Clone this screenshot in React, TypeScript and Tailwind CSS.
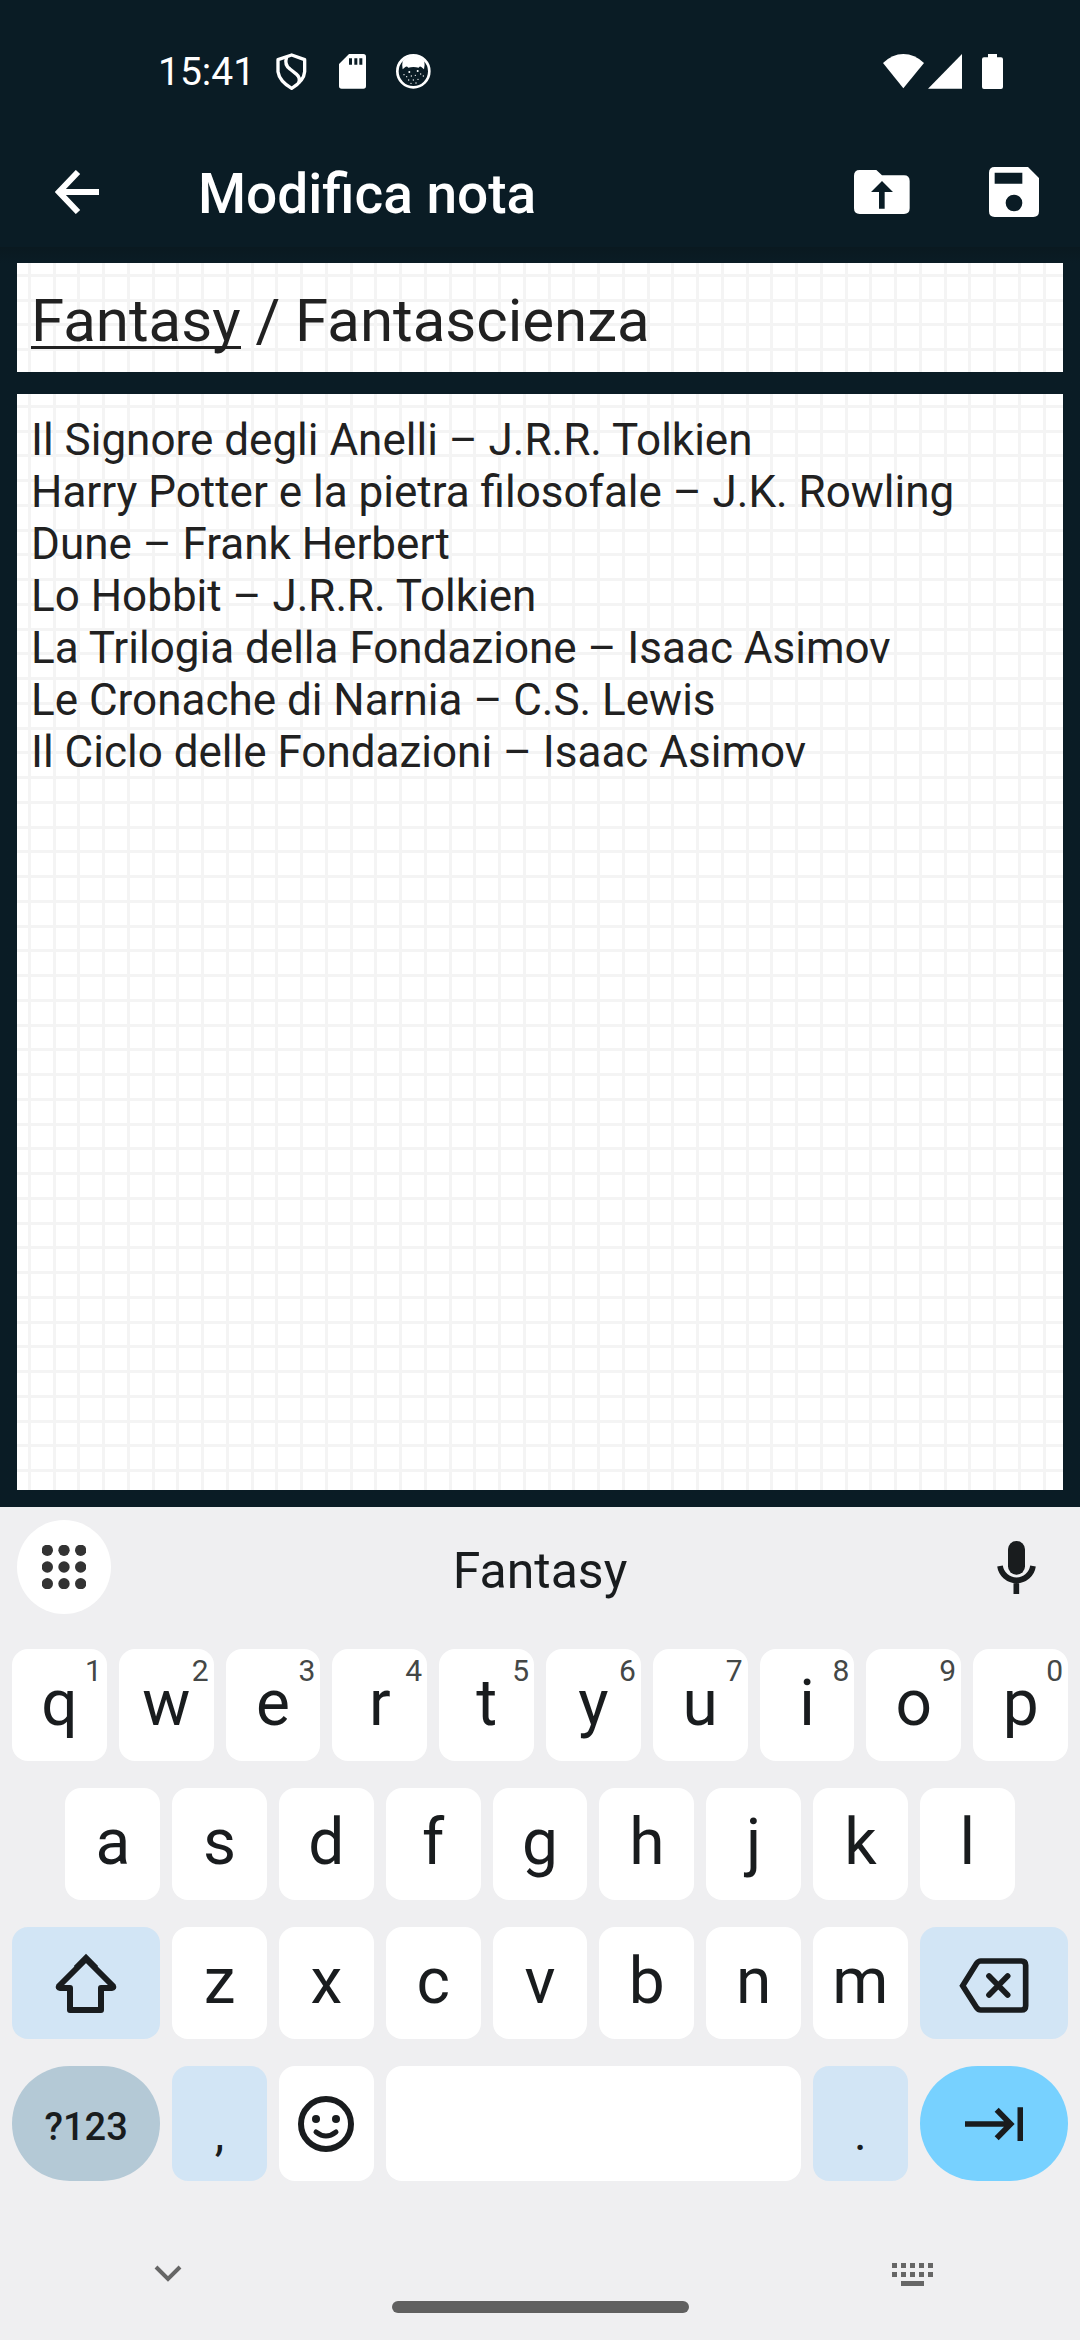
import { useState } from "react";
import type { ReactNode } from "react";

const NOTE = [
  "Il Signore degli Anelli – J.R.R. Tolkien",
  "Harry Potter e la pietra filosofale – J.K. Rowling",
  "Dune – Frank Herbert",
  "Lo Hobbit – J.R.R. Tolkien",
  "La Trilogia della Fondazione – Isaac Asimov",
  "Le Cronache di Narnia – C.S. Lewis",
  "Il Ciclo delle Fondazioni – Isaac Asimov",
].join("\n");

// Squared paper: a 99px tile with four lines per axis.
const PAPER =
  "bg-white bg-[length:99px_99px] bg-[image:linear-gradient(to_right,transparent_11px,#f4f4f4_11px,#f4f4f4_14px,transparent_14px,transparent_36px,#f4f4f4_36px,#f4f4f4_39px,transparent_39px,transparent_60px,#f4f4f4_60px,#f4f4f4_63px,transparent_63px,transparent_85px,#f4f4f4_85px,#f4f4f4_88px,transparent_88px),linear-gradient(to_bottom,transparent_11px,#f4f4f4_11px,#f4f4f4_14px,transparent_14px,transparent_36px,#f4f4f4_36px,#f4f4f4_39px,transparent_39px,transparent_60px,#f4f4f4_60px,#f4f4f4_63px,transparent_63px,transparent_85px,#f4f4f4_85px,#f4f4f4_88px,transparent_88px)]";

function StatusBar() {
  return (
    <div className="flex h-[136px] items-center justify-between pt-[7px] pr-[77px] pl-[158px] text-white">
      <div className="flex items-center">
        <span className="text-[39px] leading-[46px]">15:41</span>
        <svg className="ml-[21px] h-[37px] w-[31px]" viewBox="0 0 93 111" fill="none" stroke="currentColor">
          <path d="M47 6 L86 20 V56 Q84 84 47 106 Q10 84 6 56 V20 Z" strokeWidth="10" strokeLinejoin="round" />
          <path d="M32 12 Q24 36 42 48 L62 64 Q74 74 68 90" strokeWidth="10" />
        </svg>
        <svg className="ml-8 h-[35px] w-[27px]" viewBox="0 0 81 105" fill="currentColor">
          <path fillRule="evenodd" d="M30 0 H73 Q81 0 81 8 V96 Q81 104 73 104 H8 Q0 104 0 96 V30 Z M30 13 V32 H39 V13 Z M46 13 V32 H55 V13 Z M61 13 V32 H70 V13 Z" />
        </svg>
        <svg className="ml-[30px] h-[35px] w-[35px]" viewBox="0 0 105 105">
          <circle cx="52" cy="52" r="48" fill="none" stroke="currentColor" strokeWidth="8" />
          <path
            fill="currentColor"
            d="M20 21 Q34 6 52 6 Q70 6 85 21 Q87 34 84 46 L76 39 Q72 35 68 41 Q52 37 37 41 Q32 35 28 39 L20 46 Q17 34 20 21 Z"
          />
          <g fill="currentColor">
            <circle cx="40" cy="54" r="3" />
            <circle cx="65" cy="51" r="3" />
            <circle cx="24" cy="62" r="2" />
            <circle cx="32" cy="68" r="2" />
            <circle cx="46" cy="66" r="2" />
            <circle cx="58" cy="64" r="2" />
            <circle cx="74" cy="60" r="2" />
            <circle cx="82" cy="66" r="2" />
            <circle cx="38" cy="78" r="2" />
            <circle cx="52" cy="78" r="2" />
            <circle cx="66" cy="76" r="2" />
            <circle cx="45" cy="88" r="2" />
            <circle cx="60" cy="87" r="2" />
          </g>
        </svg>
      </div>
      <div className="flex items-center">
        <svg className="h-[35px] w-[41px]" viewBox="0 0 123 105" fill="currentColor">
          <path d="M0 27 Q28 0 61 0 Q95 0 123 27 L61 103 Z" />
        </svg>
        <svg className="ml-1 h-[35px] w-[34px]" viewBox="0 0 102 105" fill="currentColor">
          <path d="M102 0 V104 H0 Z" />
        </svg>
        <svg className="ml-5 h-[35px] w-[21px]" viewBox="0 0 63 105" fill="currentColor">
          <path d="M18 0 H45 V10 H57 Q63 10 63 16 V99 Q63 105 57 105 H6 Q0 105 0 99 V16 Q0 10 6 10 H18 Z" />
        </svg>
      </div>
    </div>
  );
}

function AppBar() {
  return (
    <header className="flex h-[111px] items-center pr-[41px] pl-[55px] text-white">
      <button type="button" aria-label="Indietro">
        <svg className="h-11 w-11" viewBox="0 0 44 44" fill="none" stroke="currentColor" strokeWidth="6">
          <path d="M44 22 H4 M23 2 L4 22 L23 42" />
        </svg>
      </button>
      <h1 className="ml-[99px] flex-1 pt-1 text-[55px] leading-[64px] font-medium">Modifica nota</h1>
      <button type="button" aria-label="Esporta">
        <svg className="h-11 w-14" viewBox="0 0 168 132" fill="currentColor">
          <path
            fillRule="evenodd"
            d="M17 0 H67 L84 16 H150 Q167 16 167 33 V115 Q167 132 150 132 H17 Q0 132 0 115 V17 Q0 0 17 0 Z M84 33 L51 66 H75 V116 H92 V66 H117 Z"
          />
        </svg>
      </button>
      <button type="button" aria-label="Salva" className="ml-[79px]">
        <svg className="h-[50px] w-[50px]" viewBox="0 0 150 150" fill="currentColor">
          <path
            fillRule="evenodd"
            d="M17 0 H117 L150 33 V133 Q150 150 133 150 H17 Q0 150 0 133 V17 Q0 0 17 0 Z M17 17 V50 H100 V17 Z M75 83 A25 25 0 1 0 75 133 A25 25 0 1 0 75 83 Z"
          />
        </svg>
      </button>
    </header>
  );
}

type KeyProps = { label: string; className: string; children?: ReactNode };

function Key({ label, className, children }: KeyProps) {
  return (
    <button type="button" aria-label={label} className={`relative flex items-center justify-center ${className}`}>
      {children}
    </button>
  );
}

function LetterKey({ char, hint, first }: { char: string; hint?: string; first?: boolean }) {
  return (
    <Key
      label={char}
      className={`h-28 rounded-2xl bg-white pb-[3px] text-[64px] leading-[76px] ${first ? "col-span-2 col-start-2" : "col-span-2"}`}
    >
      {char}
      {hint && <span className="absolute top-1 right-[5px] text-[30px] leading-9 text-[#444746]">{hint}</span>}
    </Key>
  );
}

function Keyboard() {
  return (
    <section aria-label="Tastiera" className="bg-[#efeff1] text-[#191c1e]">
      <div className="grid h-[142px] grid-cols-[94px_1fr_94px] items-start px-[17px] pt-[13px]">
        <button type="button" aria-label="Menu" className="flex h-[94px] items-center justify-center rounded-full bg-white">
          <svg className="h-11 w-11" viewBox="0 0 132 132" fill="#333333">
            {[16, 66, 116].map((y) => [16, 66, 116].map((x) => <circle key={`${x}-${y}`} cx={x} cy={y} r="17" />))}
          </svg>
        </button>
        <button type="button" className="h-[94px] pt-2 text-[50px] leading-[60px]">
          Fantasy
        </button>
        <button type="button" aria-label="Dettatura vocale" className="flex h-[94px] items-center justify-center">
          <svg className="h-[53px] w-[39px]" viewBox="0 0 117 159" fill="none" stroke="currentColor">
            <rect x="33" y="0" width="51" height="101" rx="25" fill="currentColor" stroke="none" />
            <path d="M9 75 A50 50 0 0 0 108 75 M58 125 V159" strokeWidth="17" />
          </svg>
        </button>
      </div>
      <div className="grid grid-cols-20 gap-x-3 gap-y-[27px] px-3">
        {"qwertyuiop".split("").map((c, i) => (
          <LetterKey key={c} char={c} hint={String((i + 1) % 10)} />
        ))}
        {"asdfghjkl".split("").map((c, i) => (
          <LetterKey key={c} char={c} first={i === 0} />
        ))}
        <Key label="Maiuscole" className="col-span-3 col-start-1 h-28 rounded-2xl bg-[#d2e5f5]">
          <svg className="h-[60px] w-[62px]" viewBox="0 0 62 60" fill="none" stroke="currentColor" strokeWidth="6">
            <path d="M31 6 L4 33 Q3 35 5 35 H15 V57 H46 V35 H57 Q59 35 58 33 Z" strokeLinejoin="round" />
            <path d="M21 15 L31 5 L41 15" />
          </svg>
        </Key>
        {"zxcvbnm".split("").map((c) => (
          <LetterKey key={c} char={c} />
        ))}
        <Key label="Cancella" className="col-span-3 h-28 rounded-2xl bg-[#d2e5f5] pt-[5px]">
          <svg className="h-[55px] w-[70px]" viewBox="533 174 210 165" fill="none" stroke="currentColor" strokeWidth="17">
            <path d="M544 257 L586 190 Q591 183 598 183 H720 Q733 183 733 196 V317 Q733 330 720 330 H598 Q591 330 586 323 Z" />
            <path d="M623 228 L679 285 M679 228 L623 285" strokeLinecap="round" />
          </svg>
        </Key>
        <Key
          label="Simboli"
          className="col-span-3 h-[115px] rounded-full bg-[#b4c9d6] pt-[6px] text-[38px] leading-[48px] font-medium"
        >
          ?123
        </Key>
        <Key label="Virgola" className="col-span-2 h-[115px] rounded-2xl bg-[#d2e5f5] pt-5 text-[48px] leading-[56px]">
          ,
        </Key>
        <Key label="Emoji" className="col-span-2 h-[115px] rounded-2xl bg-white">
          <svg className="h-14 w-14" viewBox="0 0 56 56" fill="none" stroke="currentColor">
            <circle cx="28" cy="28" r="25" strokeWidth="6" />
            <path d="M18 36 Q28 44 38 36" strokeWidth="5" strokeLinecap="round" />
            <circle cx="18" cy="23" r="4" fill="currentColor" stroke="none" />
            <circle cx="38" cy="23" r="4" fill="currentColor" stroke="none" />
          </svg>
        </Key>
        <Key label="Spazio" className="col-span-8 h-[115px] rounded-2xl bg-white" />
        <Key label="Punto" className="col-span-2 h-[115px] rounded-2xl bg-[#d2e5f5] pt-5 text-[48px] leading-[56px]">
          .
        </Key>
        <Key label="Avanti" className="col-span-3 h-[115px] rounded-full bg-[#77d1ff]">
          <svg className="h-[34px] w-[58px]" viewBox="552 618 174 102" fill="none" stroke="currentColor" strokeWidth="17">
            <path d="M552 669 H690 M647 626 L689 669 L647 712 M718 619 V720" />
          </svg>
        </Key>
      </div>
      <nav aria-label="Navigazione" className="grid h-[159px] grid-cols-[1fr_297px_1fr] items-start text-[#666666]">
        <button type="button" aria-label="Nascondi tastiera" className="mt-[84px] ml-[154px] w-7">
          <svg className="h-[18px] w-7" viewBox="0 0 28 18" fill="none" stroke="currentColor" strokeWidth="4">
            <path d="M2 2 L14 14 L26 2" />
          </svg>
        </button>
        <div className="mt-30 h-3 rounded-full bg-[#606060]" />
        <button type="button" aria-label="Cambia tastiera" className="mt-[82px] mr-[146px] ml-auto w-[42px]">
          <svg className="h-[23px] w-[42px]" viewBox="0 0 42 23" fill="currentColor">
            {[0, 9].map((y) =>
              [0, 9, 18, 27, 36].map((x) => <rect key={`${x}-${y}`} x={x} y={y} width="5" height="5" />),
            )}
            <rect x="9" y="18" width="23" height="5" />
          </svg>
        </button>
      </nav>
    </section>
  );
}

export default function App() {
  const [title, setTitle] = useState("Fantasy / Fantascienza");
  const [note, setNote] = useState(NOTE);
  return (
    <div className="flex min-h-screen flex-col bg-[#0a1c25] font-['Roboto',sans-serif]">
      <StatusBar />
      <AppBar />
      <main className="flex flex-1 flex-col gap-[22px] bg-linear-to-b from-[#0a1920] to-[#0a1c25] to-[16px] px-[17px] pt-4 pb-[17px] text-[#212121]">
        <div className="relative flex">
          <input
            aria-label="Titolo"
            value={title}
            onChange={(e) => setTitle(e.target.value)}
            className={`h-[109px] w-full px-[14px] pt-[5px] text-[60px] outline-none ${PAPER}`}
          />
          <div className="absolute top-[83px] left-[14px] h-[3px] w-[210px] bg-[#212121]" />
        </div>
        <textarea
          aria-label="Nota"
          value={note}
          onChange={(e) => setNote(e.target.value)}
          spellCheck={false}
          className={`w-full flex-1 resize-none px-[14px] py-5 text-[44px] leading-[52px] outline-none ${PAPER}`}
        />
      </main>
      <Keyboard />
    </div>
  );
}
